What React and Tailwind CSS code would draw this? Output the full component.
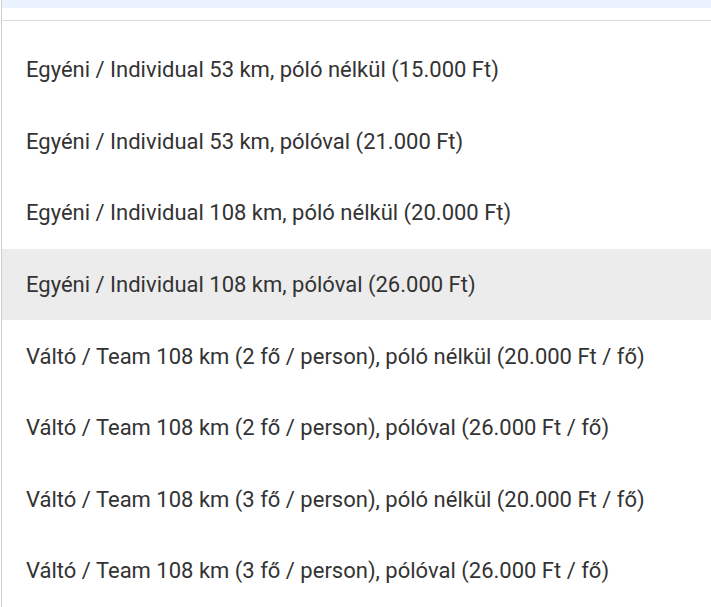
import React from 'react';

const options = [
  'Egyéni / Individual 53 km, póló nélkül (15.000 Ft)',
  'Egyéni / Individual 53 km, pólóval (21.000 Ft)',
  'Egyéni / Individual 108 km, póló nélkül (20.000 Ft)',
  'Egyéni / Individual 108 km, pólóval (26.000 Ft)',
  'Váltó / Team 108 km (2 fő / person), póló nélkül (20.000 Ft / fő)',
  'Váltó / Team 108 km (2 fő / person), pólóval (26.000 Ft / fő)',
  'Váltó / Team 108 km (3 fő / person), póló nélkül (20.000 Ft / fő)',
  'Váltó / Team 108 km (3 fő / person), pólóval (26.000 Ft / fő)',
];

const App = () => {
  const active = 3;

  return (
    <div className="h-[607px] w-[711px] overflow-hidden bg-white font-['Roboto',sans-serif]">
      <div className="ml-px h-full border-l border-[#cfcfcf]">
        <div className="h-[8px] bg-[#eaf2fd]" />
        <div className="h-[12px]" />
        <div className="border-t border-[#dcdcdc] pt-[13px]">
          <ul>
            {options.map((opt, i) => (
              <li
                key={i}
                className={
                  'flex h-[71.6px] items-center pl-[24px] text-[22px] text-[#333333] ' +
                  (i === active ? 'bg-[#ececec]' : '')
                }
              >
                {opt}
              </li>
            ))}
          </ul>
        </div>
      </div>
    </div>
  );
};

export default App;
